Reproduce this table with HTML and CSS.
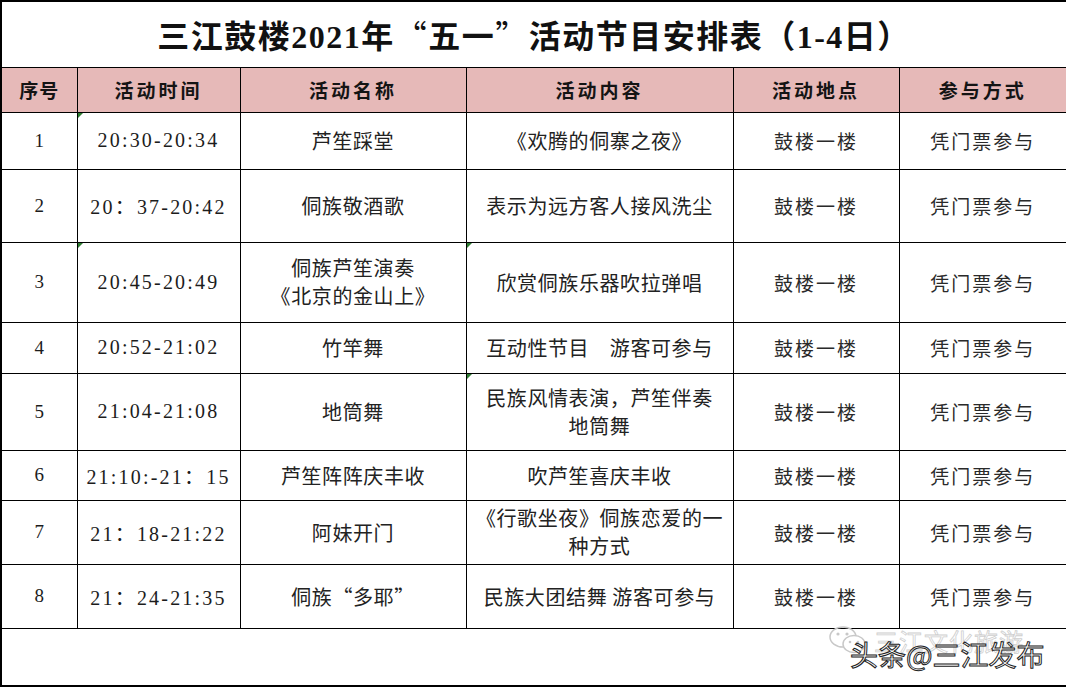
FILE: index.html
```html
<!DOCTYPE html>
<html lang="zh-CN">
<head>
<meta charset="utf-8">
<title>三江鼓楼2021年“五一”活动节目安排表</title>
<link rel="stylesheet" href="styles.css">
</head>
<body>
<div class="sheet">
<table class="schedule">
  <colgroup>
    <col class="c1"><col class="c2"><col class="c3"><col class="c4"><col class="c5"><col class="c6">
  </colgroup>
  <tr class="r-title"><td colspan="6" class="title">三江鼓楼2021年<span class="q">“</span>五一<span class="q">”</span>活动节目安排表（1-4日）</td></tr>
  <tr class="r-head">
    <th class="h-narrow">序号</th>
    <th>活动时间</th>
    <th>活动名称</th>
    <th>活动内容</th>
    <th>活动地点</th>
    <th>参与方式</th>
  </tr>
  <tr class="r1">
    <td class="num">1</td>
    <td class="time mark">20:30-20:34</td>
    <td class="song">芦笙踩堂</td>
    <td class="hei">《欢腾的侗寨之夜》</td>
    <td class="loc">鼓楼一楼</td>
    <td class="way">凭门票参与</td>
  </tr>
  <tr class="r2">
    <td class="num">2</td>
    <td class="time">20：37-20:42</td>
    <td class="hei">侗族敬酒歌</td>
    <td class="hei">表示为远方客人接风洗尘</td>
    <td class="loc">鼓楼一楼</td>
    <td class="way">凭门票参与</td>
  </tr>
  <tr class="r3">
    <td class="num">3</td>
    <td class="time mark">20:45-20:49</td>
    <td class="hei two">侗族芦笙演奏<br>《北京的金山上》</td>
    <td class="hei mark">欣赏侗族乐器吹拉弹唱</td>
    <td class="loc">鼓楼一楼</td>
    <td class="way">凭门票参与</td>
  </tr>
  <tr class="r4">
    <td class="num">4</td>
    <td class="time">20:52-21:02</td>
    <td class="song">竹竿舞</td>
    <td class="hei">互动性节目　游客可参与</td>
    <td class="loc">鼓楼一楼</td>
    <td class="way">凭门票参与</td>
  </tr>
  <tr class="r5">
    <td class="num">5</td>
    <td class="time">21:04-21:08</td>
    <td class="hei">地筒舞</td>
    <td class="hei two mark">民族风情表演，芦笙伴奏<br>地筒舞</td>
    <td class="loc">鼓楼一楼</td>
    <td class="way">凭门票参与</td>
  </tr>
  <tr class="r6">
    <td class="num">6</td>
    <td class="time">21:10:-21：15</td>
    <td class="hei">芦笙阵阵庆丰收</td>
    <td class="hei">吹芦笙喜庆丰收</td>
    <td class="loc">鼓楼一楼</td>
    <td class="way">凭门票参与</td>
  </tr>
  <tr class="r7">
    <td class="num">7</td>
    <td class="time">21：18-21:22</td>
    <td class="hei">阿妹开门</td>
    <td class="hei two">《行歌坐夜》侗族恋爱的一<br>种方式</td>
    <td class="loc">鼓楼一楼</td>
    <td class="way">凭门票参与</td>
  </tr>
  <tr class="r8">
    <td class="num">8</td>
    <td class="time">21：24-21:35</td>
    <td class="hei">侗族“多耶”</td>
    <td class="hei">民族大团结舞 游客可参与</td>
    <td class="loc">鼓楼一楼</td>
    <td class="way">凭门票参与</td>
  </tr>
  <tr class="r-foot">
    <td colspan="6" class="foot">
      <div class="watermark">
        <div class="wm-back">
          <svg class="wm-icon" width="40" height="30" viewBox="0 0 40 30">
            <ellipse cx="15" cy="12" rx="13" ry="10" fill="none" stroke="#c8c8c8" stroke-width="1.5"/>
            <ellipse cx="26" cy="19" rx="11" ry="8.5" fill="#fff" stroke="#c8c8c8" stroke-width="1.5"/>
            <circle cx="10" cy="9" r="1.6" fill="#c8c8c8"/>
            <circle cx="19" cy="9" r="1.6" fill="#c8c8c8"/>
            <circle cx="22" cy="17" r="1.3" fill="#c8c8c8"/>
            <circle cx="30" cy="17" r="1.3" fill="#c8c8c8"/>
          </svg>
          <span class="wm-back-text">三江文化旅游</span>
        </div>
        <div class="wm-front">头条@三江发布</div>
      </div>
    </td>
  </tr>
</table>
</div>
</body>
</html>
```
FILE: styles.css
```css
html, body {
  margin: 0;
  padding: 0;
  background: #ffffff;
}

.sheet {
  width: 1066px;
  height: 687px;
  overflow: hidden;
}

.schedule {
  width: 1066px;
  table-layout: fixed;
  border-collapse: collapse;
  border: 2px solid #000;
  color: #1c1c1c;
  font-family: "Noto Sans CJK SC", "Noto Sans", sans-serif;
}

.c1 { width: 76px; }
.c2 { width: 163px; }
.c3 { width: 226px; }
.c4 { width: 267px; }
.c5 { width: 166px; }
.c6 { width: 168px; }

.schedule td,
.schedule th {
  border: 1px solid #000;
  padding: 0;
  text-align: center;
  vertical-align: middle;
  position: relative;
  white-space: nowrap;
}

.r-title { height: 66px; }
.r-head { height: 45px; }
.r1 { height: 57px; }
.r2 { height: 73px; }
.r3 { height: 80px; }
.r4 { height: 51px; }
.r5 { height: 77px; }
.r6 { height: 50px; }
.r7 { height: 64px; }
.r8 { height: 64px; }
.r-foot { height: 58px; }

.title {
  font-family: "Liberation Serif", "Noto Sans CJK SC", serif;
  font-size: 32px;
  font-weight: 700;
  color: #111;
  letter-spacing: 1.5px;
  padding-top: 4px;
}

.title .q {
  font-family: "Noto Sans CJK SC", sans-serif;
  font-weight: 400;
}

.r-head th {
  background: #e6b9b8;
  font-size: 19px;
  font-weight: 700;
  letter-spacing: 3px;
  color: #141414;
}

.r-head th.h-narrow {
  letter-spacing: 1px;
}

.num {
  font-family: "Liberation Serif", "Noto Sans CJK SC", serif;
  font-size: 19px;
}

.time {
  font-family: "Liberation Serif", "Noto Sans CJK SC", serif;
  font-size: 20px;
  letter-spacing: 2.2px;
}

.song,
.hei {
  font-size: 20px;
  font-weight: 400;
  letter-spacing: 0.6px;
  color: #222;
}

.two {
  line-height: 28px;
}

.loc,
.way {
  font-size: 19px;
  font-weight: 400;
  letter-spacing: 2px;
  color: #2a2a2a;
}

.mark::before {
  content: "";
  position: absolute;
  left: 0;
  top: 0;
  width: 0;
  height: 0;
  border-top: 5px solid #2e7d32;
  border-right: 5px solid transparent;
}

.foot {
  text-align: left;
}

.watermark {
  position: absolute;
  left: 826px;
  top: -6px;
  width: 236px;
  height: 60px;
}

.wm-back {
  display: flex;
  align-items: center;
  gap: 6px;
}

.wm-icon {
  flex: none;
}

.wm-back-text {
  font-size: 24px;
  color: #ffffff;
  -webkit-text-stroke: 0.8px #cfcfcf;
  letter-spacing: 1px;
}

.wm-front {
  position: absolute;
  left: 22px;
  top: 11px;
  font-family: "Noto Sans CJK SC", sans-serif;
  font-size: 28px;
  color: #ffffff;
  -webkit-text-stroke: 1px #222;
}
```
